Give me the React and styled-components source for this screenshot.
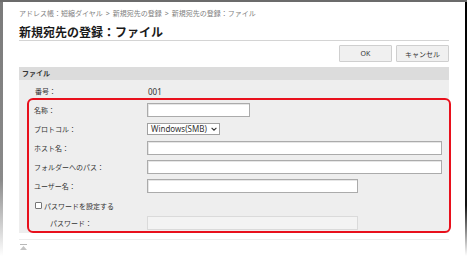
import React from "react";
import styled, { createGlobalStyle } from "styled-components";

const GlobalStyle = createGlobalStyle`
  html, body {
    margin: 0;
    padding: 0;
    height: 256px;
    overflow: hidden;
    background: #fff;
  }
  body {
    font-family: "Noto Sans", "Noto Sans CJK JP", sans-serif;
    color: #333;
  }
`;

const Frame = styled.div`
  box-sizing: border-box;
  height: 256px;
  border-top: 2px solid #6b6b6b;
  padding: 0 2px 0 3px;
  background:
    linear-gradient(#7a7a7a, #8a8a8a 70%, #fff) left top / 3px 100% no-repeat,
    linear-gradient(#000, #111 80%, #fff) right top / 2px 100% no-repeat,
    #fff;
`;

const Page = styled.div`
  padding: 0 16px;
`;

const Breadcrumb = styled.div`
  padding-top: 7px;
  font-size: 7px;
  line-height: 9px;
  color: #808080;
  white-space: nowrap;
`;

const Sep = styled.span`
  margin: 0 3px;
`;

const Title = styled.h1`
  margin: 7px 0 0;
  font-size: 12px;
  line-height: 15px;
  font-weight: 700;
  color: #1a1a1a;
  border-bottom: 1px solid #d4d4d4;
`;

const Toolbar = styled.div`
  display: flex;
  justify-content: flex-end;
  gap: 4px;
  padding: 4px 0 5px;
`;

const Button = styled.button`
  box-sizing: border-box;
  width: 53px;
  height: 17px;
  padding: 0;
  font-family: inherit;
  font-size: 7px;
  color: #333;
  background: #f0f0f0;
  border: 1px solid #cfcfcf;
  border-radius: 1px;
`;

const SectionHeader = styled.div`
  height: 13px;
  line-height: 13px;
  padding-left: 3px;
  font-size: 7px;
  font-weight: 700;
  color: #333;
  background: #dcdcdc;
`;

const SectionBody = styled.div`
  background: #eeeeee;
  padding: 4px 0 0;
`;

const Row = styled.div`
  display: flex;
  align-items: center;
  height: ${(p) => p.h || 19}px;
  padding-left: ${(p) => p.indent || 0}px;
`;

const Label = styled.div`
  width: ${(p) => p.w || 113}px;
  flex-shrink: 0;
  font-size: 7px;
  color: #333;
  white-space: nowrap;
`;

const Value = styled.div`
  font-size: 8px;
  color: #333;
`;

const Highlight = styled.div`
  margin: 0 -2px 0 8px;
  padding: 0 0 1px 5px;
  border: 2px solid #e8101c;
  border-radius: 6px;
`;

const TextInput = styled.div`
  box-sizing: border-box;
  width: ${(p) => p.w}px;
  height: 14px;
  background: ${(p) => (p.disabled ? "#f3f3f3" : "#fff")};
  border: 1px solid ${(p) => (p.disabled ? "#dadada" : "#ababab")};
  box-shadow: ${(p) => (p.disabled ? "none" : "inset 1px 1px 0 #e6e6e6")};
`;

const SelectBox = styled.div`
  box-sizing: border-box;
  display: flex;
  align-items: center;
  justify-content: space-between;
  width: 73px;
  height: 12px;
  padding: 0 2px 0 3px;
  font-size: 8px;
  line-height: 10px;
  color: #333;
  background: #fff;
  border: 1px solid #a0a0a0;
`;

const CheckLabel = styled.label`
  display: flex;
  align-items: center;
  gap: 2px;
  font-size: 7px;
  color: #333;
`;

const CheckBox = styled.span`
  box-sizing: border-box;
  width: 7px;
  height: 7px;
  background: #fff;
  border: 1px solid #767676;
  border-radius: 1px;
`;

const Footer = styled.div`
  padding-top: 6px;
`;

const Divider = styled.div`
  height: 1px;
  background: #ededed;
`;

const TopLink = styled.div`
  padding: 4px 0 0 1px;
  line-height: 0;
`;

const Chevron = () => (
  <svg width="6" height="4" viewBox="0 0 6 4">
    <path d="M0.6 0.8 L3 3.2 L5.4 0.8" fill="none" stroke="#333" strokeWidth="1.1" />
  </svg>
);

const PageTopIcon = () => (
  <svg width="7" height="6" viewBox="0 0 7 6">
    <rect x="0" y="0" width="7" height="1" fill="#b8b8b8" />
    <path d="M3.5 2 L7 6 L0 6 Z" fill="#c4c4c4" />
  </svg>
);

const App = () => {
  return (
    <Frame>
      <GlobalStyle />
      <Page>
        <Breadcrumb>
          アドレス帳：短縮ダイヤル<Sep>&gt;</Sep>新規宛先の登録<Sep>&gt;</Sep>新規宛先の登録：ファイル
        </Breadcrumb>
        <Title>新規宛先の登録：ファイル</Title>
        <Toolbar>
          <Button>OK</Button>
          <Button>キャンセル</Button>
        </Toolbar>
        <SectionHeader>ファイル</SectionHeader>
        <SectionBody>
          <Row h={14} indent={16}>
            <Label>番号：</Label>
            <Value>001</Value>
          </Row>
          <Highlight>
            <Row>
              <Label>名称：</Label>
              <TextInput w={103} />
            </Row>
            <Row>
              <Label>プロトコル：</Label>
              <SelectBox>
                Windows(SMB)
                <Chevron />
              </SelectBox>
            </Row>
            <Row>
              <Label>ホスト名：</Label>
              <TextInput w={295} />
            </Row>
            <Row>
              <Label>フォルダーへのパス：</Label>
              <TextInput w={295} />
            </Row>
            <Row>
              <Label>ユーザー名：</Label>
              <TextInput w={211} />
            </Row>
            <Row h={21} indent={1}>
              <CheckLabel>
                <CheckBox />
                パスワードを設定する
              </CheckLabel>
            </Row>
            <Row h={14} indent={16}>
              <Label w={97}>パスワード：</Label>
              <TextInput w={211} disabled />
            </Row>
          </Highlight>
        </SectionBody>
        <Footer>
          <Divider />
          <TopLink>
            <PageTopIcon />
          </TopLink>
        </Footer>
      </Page>
    </Frame>
  );
};

export default App;
